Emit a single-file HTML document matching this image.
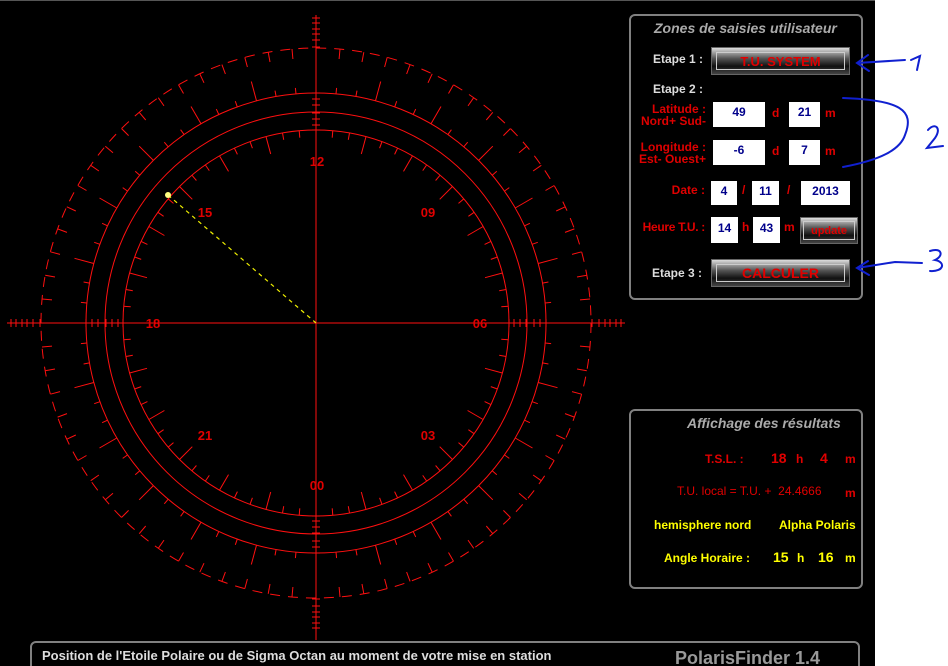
<!DOCTYPE html>
<html><head><meta charset="utf-8"><style>
html,body{margin:0;width:948px;height:666px;overflow:hidden}
body{background:#fff;font-family:"Liberation Sans",Arial,sans-serif;position:relative}
#bg{position:absolute;left:0;top:0;width:875px;height:666px;background:#000;border-top:1px solid #555;box-sizing:border-box}
.p{position:absolute;border:2px solid #808080;border-radius:6px;background:#000}
.t{position:absolute;font-weight:bold;font-size:12px;white-space:nowrap}
.ra{text-align:right;width:120px}
.w{color:#ddd}.r{color:#e00000}.y{color:#ff0}
.in{position:absolute;background:#fff;color:#00008b;font-weight:bold;font-size:12px;text-align:center;box-sizing:border-box}
.btn{position:absolute;background:linear-gradient(#ddd,#555 40%,#111 70%,#444);border:1px solid #666;box-sizing:border-box;text-align:center;color:#e00000;font-weight:bold}
.btn span{display:block;position:absolute;left:4px;right:4px;top:4px;bottom:4px;border:1px solid #ccc}
</style></head><body>
<div id="bg"></div>
<svg id="d" width="875" height="666" style="position:absolute;left:0;top:0">
<g id="g" stroke="#ff1010" stroke-width="1" fill="none"></g>
<g fill="#e00000" font-family="Liberation Sans,Arial" font-weight="bold" font-size="13" text-anchor="middle">
<text x="317" y="166">12</text><text x="205" y="217">15</text><text x="153" y="328">18</text><text x="205" y="440">21</text>
<text x="317" y="490">00</text><text x="428" y="440">03</text><text x="480" y="328">06</text><text x="428" y="217">09</text></g>
<line x1="168" y1="195" x2="316" y2="323" stroke="#ee0" stroke-width="1.2" stroke-dasharray="4,4"/>
<circle cx="168" cy="195" r="3" fill="#ffff80"/>
</svg>
<script>
var g=document.getElementById('g'),cx=316,cy=323,s='';
function L(a,b,c,d){s+='<line x1="'+a.toFixed(1)+'" y1="'+b.toFixed(1)+'" x2="'+c.toFixed(1)+'" y2="'+d.toFixed(1)+'"/>';}
function R(a,r1,r2){var t=a*Math.PI/180,c=Math.cos(t),n=Math.sin(t);L(cx+r1*c,cy+r1*n,cx+r2*c,cy+r2*n);}
s+='<circle cx="316" cy="323" r="275" stroke-dasharray="10,8"/><circle cx="316" cy="323" r="230"/><circle cx="316" cy="323" r="211"/><circle cx="316" cy="323" r="193"/>';
for(var a=0;a<360;a+=5){var lg=a%15==0;R(a,275,265);R(a,230,lg?250:236);R(a,193,lg?175:186);}
L(7,323,625,323);L(316,15,316,640);
[11,16,22,27,33,40,86,92,98,106,112,118,123].forEach(function(x){L(x,319,x,327);L(632-x,319,632-x,327);L(312,x+7,320,x+7);L(312,639-x,320,639-x);});
g.innerHTML=s;
</script>
<div class="p" style="left:629px;top:14px;width:230px;height:282px"></div>
<div class="t" style="left:654px;top:20px;color:#aaa;font-style:italic;font-size:14px">Zones de saisies utilisateur</div>
<div class="t w" style="left:653px;top:52px">Etape 1 :</div>
<div class="btn" style="left:711px;top:47px;width:139px;height:28px;font-size:13px"><span></span><div style="position:relative;top:6px">T.U. SYSTEM</div></div>
<div class="t w" style="left:653px;top:82px">Etape 2 :</div>
<div class="t r ra" style="left:586px;top:103px;line-height:12px">Latitude :</div>
<div class="t r ra" style="left:586px;top:115px;line-height:12px">Nord+ Sud-</div>
<div class="in" style="left:713px;top:102px;width:52px;height:25px;line-height:20px">49</div>
<div class="t r" style="left:772px;top:106px">d</div>
<div class="in" style="left:789px;top:102px;width:31px;height:25px;line-height:20px">21</div>
<div class="t r" style="left:825px;top:106px">m</div>
<div class="t r ra" style="left:586px;top:141px;line-height:12px">Longitude :</div>
<div class="t r ra" style="left:586px;top:153px;line-height:12px">Est- Ouest+</div>
<div class="in" style="left:713px;top:140px;width:52px;height:25px;line-height:20px">-6</div>
<div class="t r" style="left:772px;top:144px">d</div>
<div class="in" style="left:789px;top:140px;width:31px;height:25px;line-height:20px">7</div>
<div class="t r" style="left:825px;top:144px">m</div>
<div class="t r ra" style="left:585px;top:183px">Date :</div>
<div class="in" style="left:711px;top:181px;width:26px;height:24px;line-height:20px">4</div>
<div class="t r" style="left:742px;top:183px">/</div>
<div class="in" style="left:752px;top:181px;width:27px;height:24px;line-height:20px">11</div>
<div class="t r" style="left:787px;top:183px">/</div>
<div class="in" style="left:801px;top:181px;width:49px;height:24px;line-height:20px">2013</div>
<div class="t r ra" style="left:585px;top:220px;letter-spacing:-0.3px">Heure T.U. :</div>
<div class="in" style="left:711px;top:217px;width:27px;height:26px;line-height:22px">14</div>
<div class="t r" style="left:742px;top:220px">h</div>
<div class="in" style="left:753px;top:217px;width:27px;height:26px;line-height:22px">43</div>
<div class="t r" style="left:784px;top:220px">m</div>
<div class="btn" style="left:800px;top:217px;width:58px;height:27px;font-size:11px"><span style="left:2px;right:2px;top:3px;bottom:3px"></span><div style="position:relative;top:7px">update</div></div>
<div class="t w" style="left:652px;top:266px">Etape 3 :</div>
<div class="btn" style="left:711px;top:259px;width:139px;height:28px;font-size:14px"><span></span><div style="position:relative;top:5px">CALCULER</div></div>
<div class="p" style="left:629px;top:409px;width:230px;height:176px"></div>
<div class="t" style="left:687px;top:415px;color:#aaa;font-style:italic;font-size:14px">Affichage des résultats</div>
<div class="t r" style="left:705px;top:452px">T.S.L. :</div>
<div class="t r" style="left:771px;top:450px;font-size:14px">18</div>
<div class="t r" style="left:796px;top:452px">h</div>
<div class="t r" style="left:820px;top:450px;font-size:14px">4</div>
<div class="t r" style="left:845px;top:452px">m</div>
<div class="t r" style="left:677px;top:484px;font-weight:normal">T.U. local = T.U. +&nbsp; 24.4666</div>
<div class="t r" style="left:845px;top:486px">m</div>
<div class="t y" style="left:654px;top:518px">hemisphere nord</div>
<div class="t y" style="left:779px;top:518px">Alpha Polaris</div>
<div class="t y" style="left:664px;top:551px">Angle Horaire :</div>
<div class="t y" style="left:773px;top:549px;font-size:14px">15</div>
<div class="t y" style="left:797px;top:551px">h</div>
<div class="t y" style="left:818px;top:549px;font-size:14px">16</div>
<div class="t y" style="left:845px;top:551px">m</div>
<div class="p" style="left:30px;top:641px;width:826px;height:30px"></div>
<div class="t w" style="left:42px;top:648px;font-size:13px">Position de l'Etoile Polaire ou de Sigma Octan au moment de votre mise en station</div>
<div class="t" style="left:675px;top:648px;font-size:18px;color:#999">PolarisFinder 1.4</div>
<svg width="948" height="666" style="position:absolute;left:0;top:0" fill="none" stroke="#1020d0" stroke-width="2" stroke-linecap="round">
<path d="M857 63 L905 60 M868 55 L857 63 L869 71"/>
<path d="M911 60 L920 56 L917 70"/>
<path d="M843 98 C900 100 915 110 905 135 C900 150 880 160 843 167"/>
<path d="M928 130 C935 122 942 128 935 138 L927 148 L943 146"/>
<path d="M857 268 L895 262 L922 263 M868 261 L857 268 L869 275"/>
<path d="M930 251 C942 247 944 256 935 260 C946 262 944 272 930 271"/>
</svg>
</body></html>
